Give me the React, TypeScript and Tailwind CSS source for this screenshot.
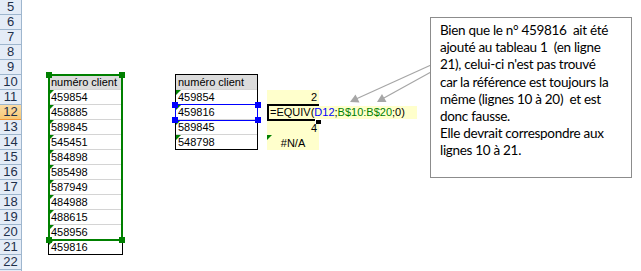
import React from "react";

const rows = [5, 6, 7, 8, 9, 10, 11, 12, 13, 14, 15, 16, 17, 18, 19, 20, 21, 22];
const t1 = ["459854", "458885", "589845", "545451", "584898", "585498", "587949", "484988", "488615", "458956"];
const t2 = ["459854", "459816", "589845", "548798"];

function Tri() {
  return (
    <span className="absolute left-0 top-0 w-0 h-0 border-t-[5px] border-t-[#008000] border-r-[5px] border-r-transparent" />
  );
}

function Cell({ v, last }: { v: string; last?: boolean }) {
  return (
    <div className={`relative h-[15px] pl-[2px] leading-[14px] ${last ? "border-b border-b-black" : "border-b border-b-[#d4d4d4]"}`}>
      <Tri />
      {v}
    </div>
  );
}

function Handle({ cls, color }: { cls: string; color: string }) {
  return <span className={`absolute w-[6px] h-[6px] ${color} ${cls}`} />;
}

export default function App() {
  return (
    <div className="relative w-[641px] h-[271px] bg-white overflow-hidden flex font-['Liberation_Sans',Arial,sans-serif] text-[11px] text-black">
      {/* row headers */}
      <div className="w-[22px] flex flex-col border-r border-r-[#9eb6ce] bg-[#e4ecf7]">
        {rows.map((r) =>
          r === 12 ? (
            <div key={r} className="h-[15px] shrink-0 border-b border-b-[#f29536] bg-gradient-to-b from-[#fbdca6] to-[#f6c873] text-[13px] leading-[14px] text-center text-[#1e2f4a]">
              {r}
            </div>
          ) : (
            <div key={r} className="h-[15px] shrink-0 border-b border-b-[#9eb6ce] text-[13px] leading-[14px] text-center text-[#1e2f4a]">
              {r}
            </div>
          )
        )}
      </div>

      <div className="flex items-start">
        <div className="w-[26px]" />
        {/* table 1 */}
        <div className="relative mt-[74px] w-[75px] border-x border-t border-black">
          <div className="h-[15px] pl-[2px] leading-[14px] bg-[#dcdcdc] border-b border-b-[#d4d4d4]">numéro client</div>
          {t1.map((v, i) => (
            <Cell key={i} v={v} />
          ))}
          <Cell v="459816" last />
          <div className="absolute left-[-1px] top-[-1px] w-[75px] h-[167px] border-2 border-[#008000]" />
          <Handle cls="left-[-3px] top-[-3px]" color="bg-[#008000]" />
          <Handle cls="right-[-3px] top-[-3px]" color="bg-[#008000]" />
          <Handle cls="left-[-3px] top-[162px]" color="bg-[#008000]" />
          <Handle cls="right-[-3px] top-[162px]" color="bg-[#008000]" />
        </div>
        <div className="w-[52px]" />
        {/* table 2 */}
        <div className="relative mt-[74px] w-[83px] border-x border-t border-black">
          <div className="h-[15px] pl-[2px] leading-[14px] bg-[#dcdcdc] border-b border-b-[#d4d4d4]">numéro client</div>
          {t2.map((v, i) => (
            <Cell key={i} v={v} last={i === t2.length - 1} />
          ))}
          <div className="absolute left-[-1px] top-[29px] w-[83px] h-[17px] border-[1.5px] border-[#0000ff]" />
          <Handle cls="left-[-4px] top-[27px]" color="bg-[#0000ff]" />
          <Handle cls="right-[-4px] top-[27px]" color="bg-[#0000ff]" />
          <Handle cls="left-[-4px] top-[42px]" color="bg-[#0000ff]" />
          <Handle cls="right-[-4px] top-[42px]" color="bg-[#0000ff]" />
        </div>
        <div className="w-[9px]" />
        {/* yellow column */}
        <div className="mt-[90px] w-[52px] flex flex-col bg-[#ffffcc]">
          <div className="h-[15px] pr-[2px] text-right leading-[15px]">2</div>
          <div className="relative h-[15px]">
            <div className="absolute left-0 top-[-1px] w-[52px] h-[17px] border-2 border-black" />
            <div className="absolute left-[2px] top-[1px] h-[13px] w-[148px] bg-[#ffffcc] pl-[1px] leading-[13px] whitespace-nowrap z-10">
              =EQUIV(<span className="text-[#0000ff]">D12</span>;<span className="text-[#008000]">B$10:B$20</span>;0)
            </div>
            <span className="absolute left-[48px] top-[14px] w-[6px] h-[5px] bg-black border-l border-t border-white z-20" />
          </div>
          <div className="h-[15px] pr-[2px] text-right leading-[16px]">4</div>
          <div className="relative h-[15px] text-center leading-[16px]">
            <Tri />
            #N/A
          </div>
        </div>
      </div>

      {/* arrows */}
      <svg className="absolute left-0 top-0 pointer-events-none" width="641" height="271">
        <line x1="431" y1="65" x2="356" y2="99" stroke="#a6a6a6" strokeWidth="1.2" />
        <line x1="431" y1="72" x2="383" y2="98.5" stroke="#a6a6a6" strokeWidth="1.2" />
        <polygon points="350,102 359.5,102.5 355.5,94.5" fill="#a6a6a6" />
        <polygon points="377,102 386.5,102 382,94" fill="#a6a6a6" />
      </svg>

      {/* text box */}
      <div className="absolute left-[430px] top-[17px] w-[202px] h-[161px] border border-[#8c8c8c] bg-white pl-[9px] pt-[4px] font-['Lato',sans-serif] text-[13.5px] leading-[17.2px] tracking-[-0.3px] text-black whitespace-pre">
        {"Bien que le n° 459816  ait été\najouté au tableau 1  (en ligne\n21), celui-ci n'est pas trouvé\ncar la référence est toujours la\nmême (lignes 10 à 20)  et est\ndonc fausse.\nElle devrait correspondre aux\nlignes 10 à 21."}
      </div>
    </div>
  );
}
